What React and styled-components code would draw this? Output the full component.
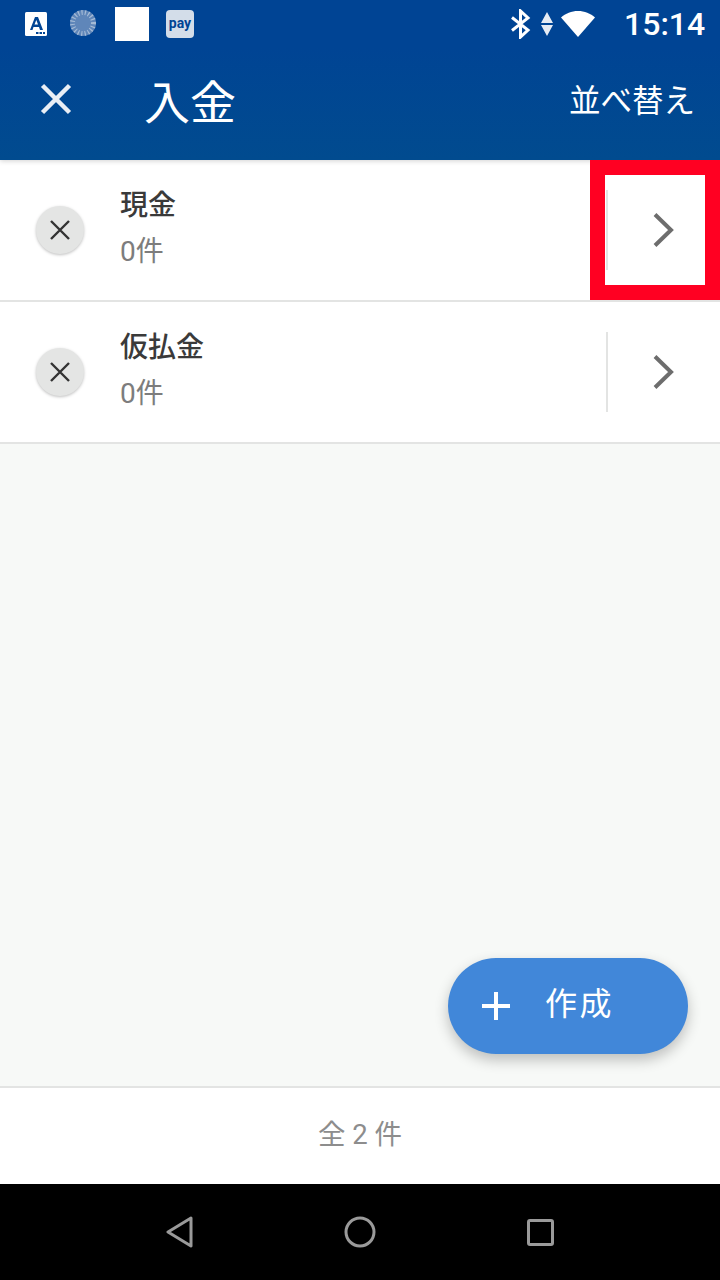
import React from "react";
import styled, { createGlobalStyle } from "styled-components";

const Global = createGlobalStyle`
  html, body { margin: 0; padding: 0; background: #000; }
  body { font-family: Roboto, "Noto Sans CJK JP", sans-serif; }
  * { box-sizing: border-box; }
`;

const Page = styled.div`
  position: relative;
  width: 720px;
  height: 1280px;
  display: flex;
  flex-direction: column;
  overflow: hidden;
  background: #f7f9f7;
`;

const Top = styled.div`
  height: 160px;
  flex: none;
  background: linear-gradient(#004494 0, #004494 48px, #014b8f 160px);
  display: flex;
  flex-direction: column;
  position: relative;
  z-index: 2;
  box-shadow: 0 1px 5px rgba(0, 0, 0, 0.18);
`;

const StatusBar = styled.div`
  height: 48px;
  display: flex;
  align-items: center;
  padding: 0 15px 0 24px;
  color: #fff;
`;

const Notifs = styled.div`
  display: flex;
  align-items: center;
  flex: 1;
`;

const WhiteSquare = styled.div`
  width: 34px;
  height: 34px;
  margin: 0 17px 0 16px;
  background: #fff;
`;

const PayBadge = styled.div`
  width: 28px;
  height: 28px;
  border-radius: 4px;
  background: #d3dde9;
  color: #004494;
  font: 700 14px/26px Roboto, sans-serif;
  text-align: center;
`;

const Clock = styled.div`
  font: 500 32px/48px Roboto, sans-serif;
  margin-left: 28px;
  width: 81px;
`;

const Status = styled.div`
  display: flex;
  align-items: center;
  gap: 8px;
`;

const Header = styled.header`
  flex: 1;
  display: flex;
  align-items: center;
  color: #fff;
  padding: 0 25px 10px 38px;
`;

const Title = styled.h1`
  margin: 0 0 0 70px;
  flex: 1;
  font: 400 46px/1 "Noto Sans CJK JP", sans-serif;
`;

const SortLink = styled.span`
  font: 400 31.5px/1 "Noto Sans CJK JP", sans-serif;
`;

const List = styled.div`
  flex: none;
`;

const Row = styled.div`
  height: 142px;
  display: flex;
  align-items: center;
  background: #fff;
  border-bottom: 2px solid #e3e4e3;
`;

const DeleteButton = styled.div`
  width: 48px;
  height: 48px;
  margin-left: 36px;
  border-radius: 50%;
  background: #e4e5e4;
  box-shadow: 0 1px 3px rgba(0, 0, 0, 0.25);
  display: flex;
  align-items: center;
  justify-content: center;
`;

const RowText = styled.div`
  flex: 1;
  margin-left: 36px;
  display: flex;
  flex-direction: column;
  margin-top: -5px;
`;

const RowName = styled.div`
  font: 500 28px/40px "Noto Sans CJK JP", sans-serif;
  color: #3a3a3a;
`;

const RowCount = styled.div`
  font: 400 28px/40px Roboto, "Noto Sans CJK JP", sans-serif;
  color: #7d7d7d;
  margin-top: 9px;
`;

const Chevron = styled.div`
  width: 114px;
  height: 80px;
  border-left: 2px solid #e3e4e3;
  display: flex;
  align-items: center;
  justify-content: center;
`;

const Spacer = styled.div`
  flex: 1;
`;

const Fab = styled.div`
  position: absolute;
  left: 448px;
  top: 958px;
  width: 240px;
  height: 96px;
  border-radius: 48px;
  background: #4187d9;
  box-shadow: 0 6px 14px rgba(0, 0, 0, 0.24);
  display: flex;
  align-items: center;
  color: #fff;
  padding-left: 33px;
`;

const FabLabel = styled.span`
  font: 400 32px/1 "Noto Sans CJK JP", sans-serif;
  letter-spacing: 2.5px;
  margin-left: 34px;
  margin-top: -10px;
`;

const Footer = styled.footer`
  height: 98px;
  flex: none;
  background: #fff;
  border-top: 2px solid #e3e4e3;
  display: flex;
  align-items: center;
  justify-content: center;
  color: #8d8d8d;
  font: 400 27.5px/1 Roboto, "Noto Sans CJK JP", sans-serif;
  padding-bottom: 2px;
`;

const NavBar = styled.nav`
  height: 96px;
  flex: none;
  background: #000;
  display: flex;
  align-items: center;
  justify-content: center;
  gap: 151px;
`;

const HighlightFrame = styled.div`
  position: absolute;
  left: 590px;
  top: 160px;
  width: 130px;
  height: 140px;
  border: 15px solid #ff0022;
  z-index: 3;
`;

const CloseGlyph = ({ size, sw, color }) => (
  <svg width={size} height={size} viewBox="0 0 24 24">
    <path d="M3 3 21 21M21 3 3 21" stroke={color} strokeWidth={sw} fill="none" />
  </svg>
);

const ChevronGlyph = () => (
  <svg width="24" height="36" viewBox="0 0 24 36">
    <path d="M3 2.500 19 18 3 33.500" stroke="#6d6d6d" strokeWidth="4" fill="none" />
  </svg>
);

const items = ["現金", "仮払金"];

export default function App() {
  return (
    <Page>
      <Global />
      <Top>
        <StatusBar>
          <Notifs>
            <svg width="24" height="28" viewBox="0 0 24 28">
              <rect x="1" y="2" width="22" height="24" rx="1.500" fill="#fff" />
              <path d="M6 20 11 7h3l5 13h-3l-1-3H9.500l-1 3zM10.500 14.500h3.500L12.300 10z" fill="#004494" fillRule="evenodd" />
              <path d="M12 22h2.500v2H12zM15.500 22H18v2h-2.500zM19 22h2v2h-2z" fill="#004494" />
            </svg>
            <svg style={{ marginLeft: 21 }} width="30" height="30" viewBox="0 0 30 30">
              <circle cx="14" cy="14" r="13" fill="#5f86b9" />
              <path d="M24 5a13.500 13.500 0 0 1-19 20 13 13 0 0 0 19-20z" fill="#e3e9f1" />
              <circle cx="14" cy="14" r="10.500" fill="none" stroke="#a5bbd6" strokeWidth="5" strokeDasharray="1.200 2.200" />
            </svg>
            <WhiteSquare />
            <PayBadge>pay</PayBadge>
          </Notifs>
          <Status>
            <svg width="22" height="30" viewBox="0 0 22 30">
              <path d="M2 8.500 18 21l-7.500 7V2l7.500 7L2 21.500" stroke="#fff" strokeWidth="3" fill="none" />
            </svg>
            <svg width="14" height="26" viewBox="0 0 14 26">
              <path d="M7 1l6 11H1zM7 25l-6-11h12z" fill="#e6ecf4" />
            </svg>
            <svg style={{ marginLeft: -2 }} width="36" height="28" viewBox="0 0 36 28">
              <path d="M18 27 1 7.500C5.500 3.500 11.500 1 18 1s12.500 2.500 17 6.500z" fill="#fff" />
            </svg>
          </Status>
          <Clock>15:14</Clock>
        </StatusBar>
        <Header>
          <CloseGlyph size={36} sw={3} color="#e9eef5" />
          <Title>入金</Title>
          <SortLink>並べ替え</SortLink>
        </Header>
      </Top>
      <List>
        {items.map((name) => (
          <Row key={name}>
            <DeleteButton>
              <CloseGlyph size={24} sw={2.400} color="#333" />
            </DeleteButton>
            <RowText>
              <RowName>{name}</RowName>
              <RowCount>0件</RowCount>
            </RowText>
            <Chevron>
              <ChevronGlyph />
            </Chevron>
          </Row>
        ))}
      </List>
      <Spacer />
      <Fab>
        <svg width="30" height="30" viewBox="0 0 30 30">
          <path d="M15 1v28M1 15h28" stroke="#fff" strokeWidth="4" fill="none" />
        </svg>
        <FabLabel>作成</FabLabel>
      </Fab>
      <Footer>全 2 件</Footer>
      <NavBar>
        <svg width="27" height="32" viewBox="0 0 27 32">
          <path d="M25 2 2 16l23 14z" stroke="#9a9a9a" strokeWidth="3" strokeLinejoin="round" fill="none" />
        </svg>
        <svg width="32" height="32" viewBox="0 0 32 32">
          <circle cx="16" cy="16" r="14" stroke="#9a9a9a" strokeWidth="3" fill="none" />
        </svg>
        <svg width="27" height="27" viewBox="0 0 27 27">
          <rect x="1.500" y="1.500" width="24" height="24" rx="1.500" stroke="#9a9a9a" strokeWidth="3" fill="none" />
        </svg>
      </NavBar>
      <HighlightFrame />
    </Page>
  );
}
